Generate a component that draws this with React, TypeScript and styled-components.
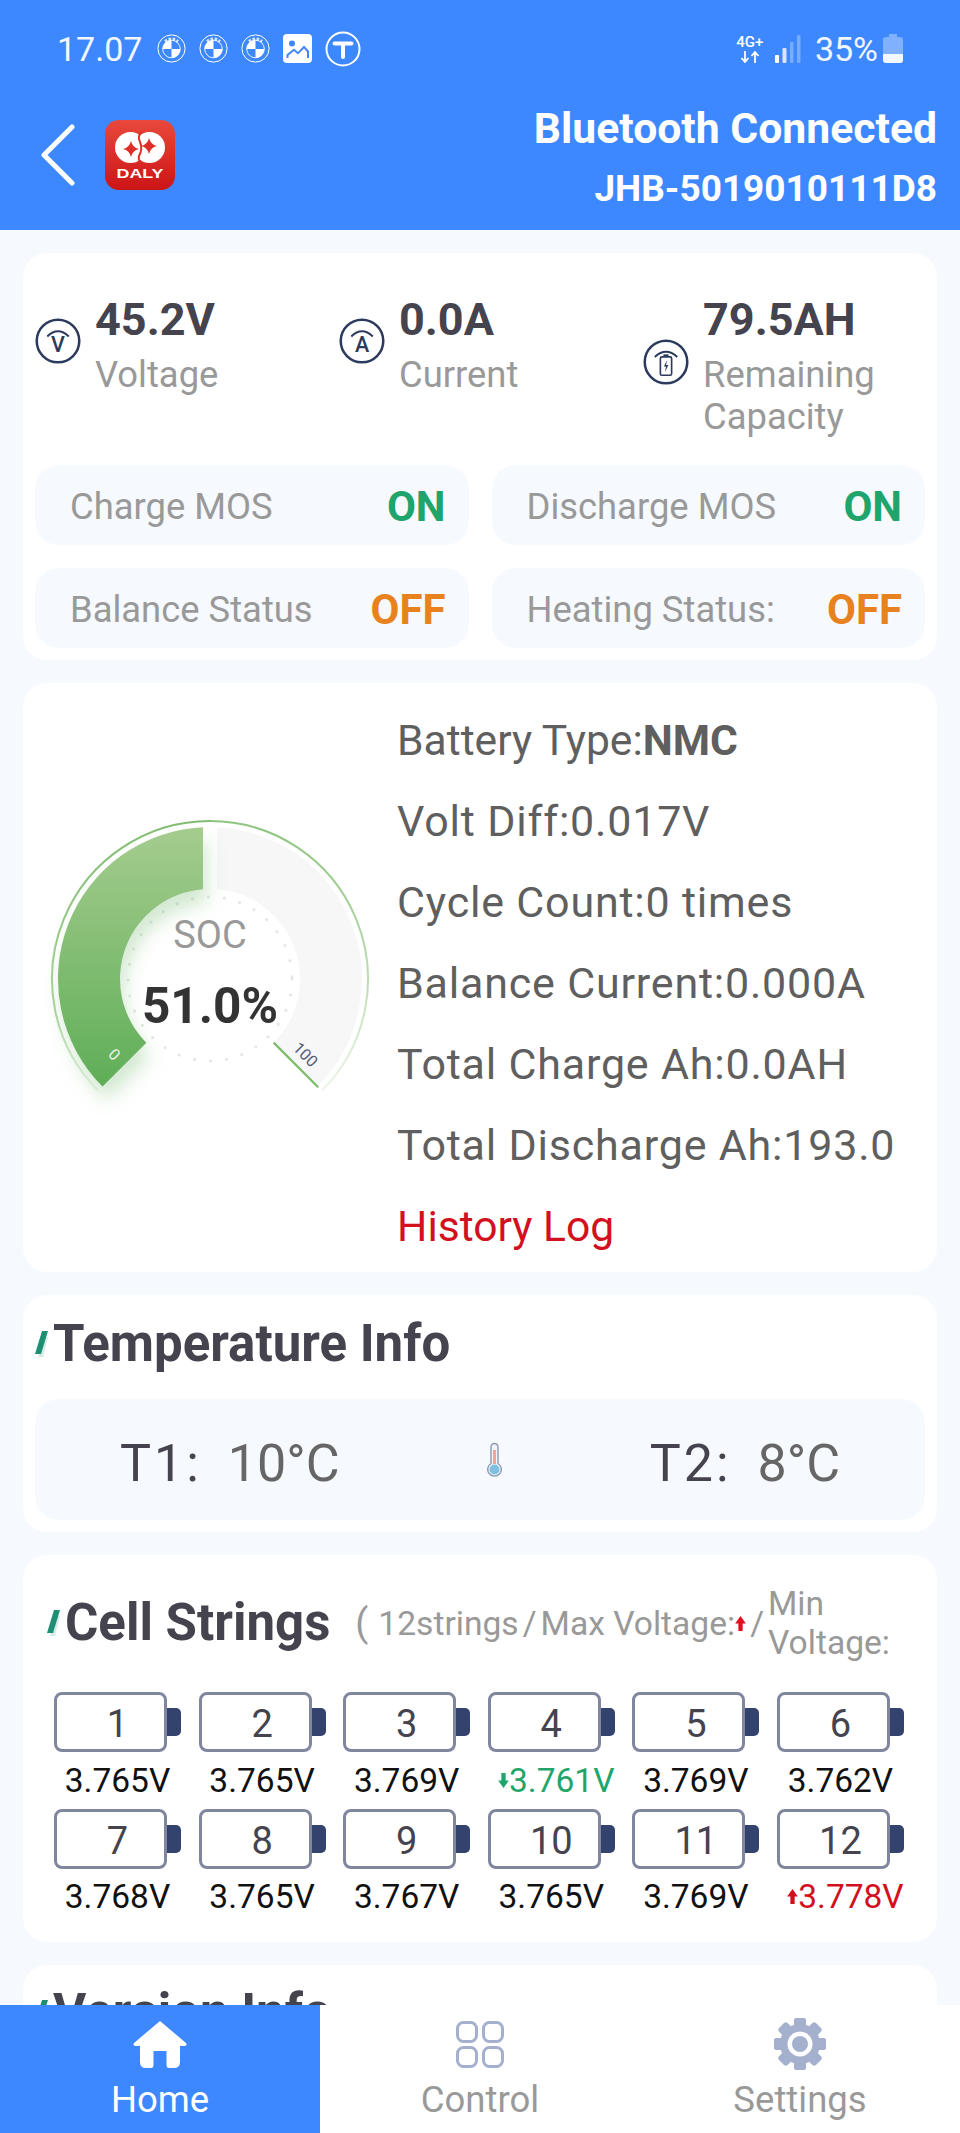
import styled, { createGlobalStyle } from 'styled-components';

const BLUE = '#3d88ff';
const PANEL = '#f6f9fe';

const cells = [
  { id: 1, volts: '3.765V' },
  { id: 2, volts: '3.765V' },
  { id: 3, volts: '3.769V' },
  { id: 4, volts: '3.761V', mark: 'min' },
  { id: 5, volts: '3.769V' },
  { id: 6, volts: '3.762V' },
  { id: 7, volts: '3.768V' },
  { id: 8, volts: '3.765V' },
  { id: 9, volts: '3.767V' },
  { id: 10, volts: '3.765V' },
  { id: 11, volts: '3.769V' },
  { id: 12, volts: '3.778V', mark: 'max' },
];

const GlobalStyle = createGlobalStyle`
  html, body {
    margin: 0;
    padding: 0;
    background: ${PANEL};
    font-family: Roboto, "Liberation Sans", sans-serif;
  }
`;

function polar(r: number, deg: number) {
  const a = (deg * Math.PI) / 180;
  return `${(170 + r * Math.sin(a)).toFixed(2)} ${(169 - r * Math.cos(a)).toFixed(2)}`;
}

// ring sector whose straight ends may sit at different angles on each radius
function sector(r1: number, r2: number, from1: number, to1: number, from2: number, to2: number) {
  const large = to1 - from1 > 180 ? 1 : 0;
  return `M${polar(r1, from1)} A${r1} ${r1} 0 ${large} 1 ${polar(r1, to1)} L${polar(r2, to2)} A${r2} ${r2} 0 ${large} 0 ${polar(r2, from2)} Z`;
}

function Bmw() {
  return (
    <svg width="29" height="29" viewBox="0 0 29 29">
      <circle cx="14.5" cy="14.5" r="13.6" fill="none" stroke="#fff" strokeWidth="1" />
      <path d="M8 7.5Q14.5 2.5 21 7.5" fill="none" stroke="#fff" strokeWidth="3" strokeDasharray="2.5 1.6" opacity="0.8" />
      <circle cx="14.5" cy="15" r="8.8" fill="none" stroke="#fff" strokeWidth="0.9" />
      <path d="M14.5 15V6.2A8.8 8.8 0 0 0 5.7 15Z M14.5 15V23.8A8.8 8.8 0 0 0 23.3 15Z" fill="#fff" />
    </svg>
  );
}

function PictureIcon() {
  return (
    <svg width="29" height="29" viewBox="0 0 29 29">
      <rect width="29" height="29" rx="4" fill="#fff" />
      <circle cx="9" cy="9.5" r="3" fill={BLUE} />
      <path d="M3.5 24V20.5L11 14.5L15 18L21 11.5L26 17V24Z" fill={BLUE} />
      <path d="M5.5 24V21.5L11 17L15 20.5L21 14.5L24 18V24Z" fill="#fff" />
    </svg>
  );
}

function TIcon() {
  return (
    <svg width="36" height="36" viewBox="0 0 36 36">
      <circle cx="18" cy="18" r="16.5" fill="none" stroke="#fff" strokeWidth="2" />
      <path d="M9.5 12.5H26.5M18 12.5V26" fill="none" stroke="#fff" strokeWidth="4" strokeLinecap="round" />
    </svg>
  );
}

function NetArrows() {
  return (
    <svg width="20" height="12" viewBox="0 0 20 12">
      <path d="M5 0V10M1.5 7L5 11L8.5 7M15 12V2M11.5 5L15 1L18.5 5" fill="none" stroke="#fff" strokeWidth="1.8" />
    </svg>
  );
}

function SignalIcon() {
  return (
    <svg width="26" height="28" viewBox="0 0 26 28">
      <rect x="0" y="20" width="4" height="8" rx="1" fill="#fff" />
      <rect x="7.5" y="13" width="4" height="15" rx="1" fill="#fff" opacity="0.8" />
      <rect x="15" y="7" width="3.5" height="21" rx="1" fill="#fff" opacity="0.3" />
      <rect x="22" y="0" width="3.5" height="28" rx="1" fill="#fff" opacity="0.3" />
    </svg>
  );
}

function BatteryIcon() {
  return (
    <svg width="20" height="29" viewBox="0 0 20 29">
      <path d="M6 0H14V3H17Q20 3 20 6V26Q20 29 17 29H3Q0 29 0 26V6Q0 3 3 3H6Z" fill="#fff" opacity="0.35" />
      <path d="M0 20H20V26Q20 29 17 29H3Q0 29 0 26Z" fill="#fff" opacity="0.9" />
    </svg>
  );
}

function DalyLogo() {
  return (
    <svg width="70" height="70" viewBox="0 0 70 70">
      <defs>
        <linearGradient id="dalyRed" x1="0" y1="0" x2="0" y2="1">
          <stop offset="0" stopColor="#e9493c" />
          <stop offset="1" stopColor="#cc1416" />
        </linearGradient>
      </defs>
      <rect width="70" height="70" rx="14" fill="url(#dalyRed)" />
      <circle cx="25.5" cy="27.5" r="15.5" fill="#fff" />
      <circle cx="44.5" cy="27.5" r="15.5" fill="#fff" />
      <path d="M26 21Q27.5 27.5 34 29Q27.5 30.5 26 37Q24.5 30.5 18 29Q24.5 27.5 26 21Z" fill="#dd2f28" />
      <path d="M44 18Q45.5 24.5 52 26Q45.5 27.5 44 34Q42.5 27.5 36 26Q42.5 24.5 44 18Z" fill="#dd2f28" />
      <path d="M37 12Q32 16 35 22Q38 29 34 36Q33 40 36 43" fill="none" stroke="#dd2f28" strokeWidth="2" />
      <text x="35" y="58" textAnchor="middle" fontFamily="Liberation Sans, sans-serif" fontWeight="700" fontSize="12" fill="#fff" textLength="47" lengthAdjust="spacingAndGlyphs">DALY</text>
    </svg>
  );
}

function MeterIcon({ letter }: { letter: string }) {
  return (
    <svg width="46" height="46" viewBox="0 0 45 45">
      <circle cx="22.5" cy="22.5" r="20.8" fill="none" stroke="#2c3a5e" strokeWidth="2.5" />
      <path d="M12 18Q22.5 8 33 18" fill="none" stroke="#2c3a5e" strokeWidth="2" />
      <text x="22.5" y="33.5" textAnchor="middle" fontFamily="Roboto, sans-serif" fontSize="21" fontWeight="500" fill="#2c3a5e">{letter}</text>
    </svg>
  );
}

function CapacityIcon() {
  return (
    <svg width="46" height="46" viewBox="0 0 45 45">
      <circle cx="22.5" cy="22.5" r="20.8" fill="none" stroke="#2c3a5e" strokeWidth="2.5" />
      <path d="M11.5 17.5Q22.5 7.5 33.5 17.5" fill="none" stroke="#2c3a5e" strokeWidth="2" />
      <rect x="17" y="17.5" width="11" height="18" rx="1.5" fill="none" stroke="#2c3a5e" strokeWidth="1.6" />
      <path d="M20 15.8H25" stroke="#2c3a5e" strokeWidth="1.6" />
      <path d="M23.5 20.5L20.5 27H22.5L21.5 32.5L24.8 25.5H22.6Z" fill="#2c3a5e" />
    </svg>
  );
}

function Gauge() {
  return (
    <svg width="340" height="336" viewBox="0 0 340 336">
      <defs>
        <linearGradient id="socFill" x1="0" y1="0" x2="0" y2="1">
          <stop offset="0" stopColor="#a5cc8f" />
          <stop offset="1" stopColor="#5fae57" />
        </linearGradient>
        <linearGradient id="ringLeft" x1="0" y1="0" x2="0" y2="1">
          <stop offset="0" stopColor="#7fbc6f" />
          <stop offset="0.7" stopColor="#a9d39c" />
          <stop offset="1" stopColor="#eef6ec" />
        </linearGradient>
        <linearGradient id="ringRight" x1="0" y1="0" x2="0" y2="1">
          <stop offset="0" stopColor="#8cc47e" />
          <stop offset="0.6" stopColor="#bddcb3" />
          <stop offset="1" stopColor="#eef6ec" />
        </linearGradient>
        <filter id="socShadow" x="-30%" y="-20%" width="160%" height="140%">
          <feDropShadow dx="4" dy="14" stdDeviation="9" floodColor="#5fae57" floodOpacity="0.28" />
        </filter>
      </defs>
      <path d={`M${polar(158, 225)} A158 158 0 0 1 ${polar(158, 360)}`} fill="none" stroke="url(#ringLeft)" strokeWidth="2" />
      <path d={`M${polar(158, 0)} A158 158 0 0 1 ${polar(158, 135)}`} fill="none" stroke="url(#ringRight)" strokeWidth="2" />
      <path d={sector(152, 90, 2.64, 135, 4.46, 135)} fill="#f7f7f8" />
      <path d={`M${polar(90, 135)} L${polar(153, 135)}`} stroke="#7dbb6c" strokeWidth="2.2" />
      <circle cx="170" cy="169" r="82" fill="none" stroke="#e6e6e8" strokeWidth="3" strokeLinecap="round" strokeDasharray="0.1 15.9" />
      <path d={sector(152, 90, 225, 357.36, 225, 355.54)} fill="url(#socFill)" filter="url(#socShadow)" />
      <text x="74" y="250" textAnchor="middle" fontFamily="Roboto, sans-serif" fontSize="16" fill="#e9f4e5" transform="rotate(45 74 245)">0</text>
      <text x="265" y="250" textAnchor="middle" fontFamily="Roboto, sans-serif" fontSize="16" fill="#555a78" transform="rotate(45 265 245)">100</text>
    </svg>
  );
}

function SlashMark() {
  return (
    <svg width="18" height="30" viewBox="0 0 18 30">
      <path d="M8 8H13L8 28H3Z" fill="#d4ebe6" />
      <path d="M7 2H13L6 25H0Z" fill="#1f8f74" />
    </svg>
  );
}

function Thermometer() {
  return (
    <svg width="15" height="36" viewBox="0 0 15 36">
      <path d="M4 5a3.5 3.5 0 0 1 7 0V21.5a6.8 6.8 0 1 1 -7 0Z" fill="#f1f4f8" stroke="#8d9ab0" strokeWidth="1.4" />
      <rect x="6" y="8" width="3" height="14" fill="#e8a89a" />
      <circle cx="7.5" cy="27.5" r="5" fill="#7fbfe0" />
    </svg>
  );
}

function Arrow({ up, color }: { up?: boolean; color: string }) {
  return (
    <svg width="11" height="15" viewBox="0 0 10 14">
      <path d={up ? 'M5 0L10 7H7V14H3V7H0Z' : 'M5 14L10 7H7V0H3V7H0Z'} fill={color} />
    </svg>
  );
}

function HomeIcon() {
  return (
    <svg width="54" height="47" viewBox="0 0 54 47">
      <path d="M27 0L53 22Q54.5 24 52 25H47V41Q47 47 41 47H36Q33.5 47 33.5 44V30H20.5V44Q20.5 47 18 47H13Q7 47 7 41V25H2Q-0.5 24 1 22Z" fill="#fff" />
    </svg>
  );
}

function ControlIcon() {
  return (
    <svg width="48" height="47" viewBox="0 0 48 47">
      <g fill="none" stroke="#a4b0cd" strokeWidth="3">
        <rect x="1.5" y="1.5" width="19" height="19" rx="6" />
        <rect x="27.5" y="1.5" width="19" height="19" rx="6" />
        <rect x="1.5" y="26.5" width="19" height="19" rx="6" />
        <rect x="27.5" y="26.5" width="19" height="19" rx="6" />
      </g>
    </svg>
  );
}

function GearIcon() {
  return (
    <svg width="52" height="52" viewBox="0 0 52 52">
      {[0, 45, 90, 135, 180, 225, 270, 315].map((deg) => (
        <rect key={deg} x="20" y="0" width="12" height="52" rx="3" fill="#a4b0cd" transform={`rotate(${deg} 26 26)`} />
      ))}
      <circle cx="26" cy="26" r="20" fill="#a4b0cd" />
      <circle cx="26" cy="26" r="12.5" fill="#fff" />
      <circle cx="26" cy="26" r="8" fill="#a4b0cd" />
    </svg>
  );
}

function App() {
  return (
    <Screen>
      <GlobalStyle />
      <Header>
        <StatusBar>
          <Clock>17.07</Clock>
          <StatusIcons>
            <Bmw />
            <Bmw />
            <Bmw />
            <PictureIcon />
            <TIcon />
          </StatusIcons>
          <StatusRight>
            <Network>
              <span>4G+</span>
              <NetArrows />
            </Network>
            <SignalIcon />
            <Percent>35%</Percent>
            <BatteryIcon />
          </StatusRight>
        </StatusBar>
        <NavRow>
          <BackArrow width="34" height="62" viewBox="0 0 34 62">
            <path d="M31 3L3 31L31 59" fill="none" stroke="#fff" strokeWidth="5" strokeLinecap="round" strokeLinejoin="round" />
          </BackArrow>
          <DalyLogo />
          <DeviceInfo>
            <ConnState>Bluetooth Connected</ConnState>
            <DeviceId>JHB-5019010111D8</DeviceId>
          </DeviceInfo>
        </NavRow>
      </Header>

      <Scroll>
        <StatusCard>
          <Stats>
            <Stat>
              <MeterIcon letter="V" />
              <StatText>
                <StatValue>45.2V</StatValue>
                <StatLabel>Voltage</StatLabel>
              </StatText>
            </Stat>
            <Stat>
              <MeterIcon letter="A" />
              <StatText>
                <StatValue>0.0A</StatValue>
                <StatLabel>Current</StatLabel>
              </StatText>
            </Stat>
            <Stat>
              <CapacityIcon />
              <StatText>
                <StatValue>79.5AH</StatValue>
                <StatLabel>Remaining Capacity</StatLabel>
              </StatText>
            </Stat>
          </Stats>
          <Flags>
            <Flag>
              <FlagLabel>Charge MOS</FlagLabel>
              <FlagValue $on>ON</FlagValue>
            </Flag>
            <Flag>
              <FlagLabel>Discharge MOS</FlagLabel>
              <FlagValue $on>ON</FlagValue>
            </Flag>
            <Flag>
              <FlagLabel>Balance Status</FlagLabel>
              <FlagValue>OFF</FlagValue>
            </Flag>
            <Flag>
              <FlagLabel>Heating Status:</FlagLabel>
              <FlagValue>OFF</FlagValue>
            </Flag>
          </Flags>
        </StatusCard>

        <SocCard>
          <GaugeWrap>
            <Gauge />
            <Readout>
              <SocLabel>SOC</SocLabel>
              <SocValue>51.0%</SocValue>
            </Readout>
          </GaugeWrap>
          <InfoList>
            <InfoRow $tight>Battery Type:<b>NMC</b></InfoRow>
            <InfoRow>Volt Diff:0.017V</InfoRow>
            <InfoRow>Cycle Count:0 times</InfoRow>
            <InfoRow>Balance Current:0.000A</InfoRow>
            <InfoRow>Total Charge Ah:0.0AH</InfoRow>
            <InfoRow>Total Discharge Ah:193.0</InfoRow>
            <InfoRow $tight $link>History Log</InfoRow>
          </InfoList>
        </SocCard>

        <TempCard>
          <SectionTitle>
            <SlashMark />
            Temperature Info
          </SectionTitle>
          <TempPanel>
            <TempItem>
              <TempName>T1:</TempName>
              <TempValue>10°C</TempValue>
            </TempItem>
            <Thermometer />
            <TempItem>
              <TempName>T2:</TempName>
              <TempValue>8°C</TempValue>
            </TempItem>
          </TempPanel>
        </TempCard>

        <CellCard>
          <CellHead>
            <SectionTitle>
              <SlashMark />
              Cell Strings
            </SectionTitle>
            <Paren>(</Paren>
            <CellNote>12strings</CellNote>
            <NoteSlash>/</NoteSlash>
            <CellNote>Max Voltage:</CellNote>
            <Arrow up color="#e0101e" />
            <NoteSlash>/</NoteSlash>
            <CellNote $wrap>Min Voltage:</CellNote>
          </CellHead>
          <CellGrid>
            {cells.map((cell) => (
              <Cell key={cell.id}>
                <Battery>
                  <BatteryBody>{cell.id}</BatteryBody>
                  <BatteryNub />
                </Battery>
                <Volts $mark={cell.mark}>
                  {cell.mark === 'min' && <Arrow color="#1fa56b" />}
                  {cell.mark === 'max' && <Arrow up color="#d3101e" />}
                  {cell.volts}
                </Volts>
              </Cell>
            ))}
          </CellGrid>
        </CellCard>

        <VersionCard>
          <SectionTitle>
            <SlashMark />
            Version Info
          </SectionTitle>
        </VersionCard>
      </Scroll>

      <TabBar>
        <Tab $active>
          <TabIcon>
            <HomeIcon />
          </TabIcon>
          Home
        </Tab>
        <Tab>
          <TabIcon>
            <ControlIcon />
          </TabIcon>
          Control
        </Tab>
        <Tab>
          <TabIcon>
            <GearIcon />
          </TabIcon>
          Settings
        </Tab>
      </TabBar>
    </Screen>
  );
}

const Screen = styled.div`
  display: flex;
  flex-direction: column;
  height: 100vh;
  overflow: hidden;
  background: ${PANEL};
`;

const Header = styled.header`
  flex: none;
  height: 230px;
  background: ${BLUE};
  color: #fff;
`;

const StatusBar = styled.div`
  display: flex;
  align-items: center;
  height: 97px;
  padding: 0 57px 0 57px;
`;

const Clock = styled.span`
  font-size: 34px;
  color: #f2f7ff;
`;

const StatusIcons = styled.div`
  display: flex;
  align-items: center;
  gap: 13px;
  margin-left: 15px;
`;

const StatusRight = styled.div`
  display: flex;
  align-items: center;
  margin-left: auto;
`;

const Network = styled.div`
  display: flex;
  flex-direction: column;
  align-items: center;
  width: 30px;
  margin-right: 10px;
  font-size: 15px;
  font-weight: 500;
  line-height: 17px;

  span {
    white-space: nowrap;
  }
`;

const Percent = styled.span`
  margin: 0 5px 0 14px;
  font-size: 34px;
  color: #f2f7ff;
`;

const NavRow = styled.div`
  display: flex;
  align-items: center;
  height: 125px;
  box-sizing: border-box;
  padding: 0 23px 9px 41px;
`;

const BackArrow = styled.svg`
  margin-right: 30px;
`;

const DeviceInfo = styled.div`
  align-self: flex-start;
  margin-left: auto;
  text-align: right;
  white-space: nowrap;
`;

const ConnState = styled.div`
  font-size: 42.7px;
  line-height: 62px;
  font-weight: 700;
`;

const DeviceId = styled.div`
  font-size: 37px;
  line-height: 60px;
  font-weight: 700;
`;

const Scroll = styled.main`
  flex: 1;
  min-height: 0;
  overflow: hidden;
  display: flex;
  flex-direction: column;
  gap: 23px;
  padding: 23px 23px 0;
`;

const Card = styled.section`
  flex: none;
  background: #fff;
  border-radius: 24px;
`;

const StatusCard = styled(Card)`
  height: 407px;
  padding: 33px 12px 12px;
  box-sizing: border-box;
`;

const Stats = styled.div`
  display: grid;
  grid-template-columns: repeat(3, 304px);
  height: 179px;
`;

const Stat = styled.div`
  display: flex;
  align-items: center;
  align-self: start;
  gap: 14px;
`;

const StatText = styled.div`
  flex: 1;
  min-width: 0;
`;

const StatValue = styled.div`
  font-size: 45px;
  line-height: 68px;
  font-weight: 700;
  color: #45434e;
`;

const StatLabel = styled.div`
  font-size: 36.4px;
  line-height: 42px;
  color: #999;
`;

const Flags = styled.div`
  display: grid;
  grid-template-columns: 1fr 1fr;
  gap: 23px;
`;

const Flag = styled.div`
  display: flex;
  align-items: center;
  justify-content: space-between;
  height: 80px;
  padding: 2px 23px 0 35px;
  box-sizing: border-box;
  border-radius: 24px;
  background: ${PANEL};
`;

const FlagLabel = styled.span`
  font-size: 36.4px;
  color: #999;
`;

const FlagValue = styled.span<{ $on?: boolean }>`
  font-size: 42px;
  font-weight: 700;
  color: ${(p) => (p.$on ? '#1fa56b' : '#e8821f')};
`;

const SocCard = styled(Card)`
  display: flex;
  align-items: center;
  height: 589px;
  padding-left: 17px;
  box-sizing: border-box;
`;

const GaugeWrap = styled.div`
  position: relative;
  flex: none;
  width: 340px;
  height: 336px;
  margin-right: 17px;
`;

const Readout = styled.div`
  position: absolute;
  top: 103px;
  left: 0;
  right: 0;
  display: flex;
  flex-direction: column;
  align-items: center;
`;

const SocLabel = styled.div`
  font-size: 38px;
  line-height: 44px;
  color: #999;
`;

const SocValue = styled.div`
  margin-top: 21px;
  font-size: 49.5px;
  line-height: 56px;
  font-weight: 700;
  color: #333;
`;

const InfoList = styled.div`
  flex: 1;
  padding-top: 12px;
`;

const InfoRow = styled.div<{ $link?: boolean; $tight?: boolean }>`
  font-size: ${(p) => (p.$tight ? '42.6px' : '43px')};
  letter-spacing: ${(p) => (p.$tight ? '0' : '0.8px')};
  line-height: 81px;
  color: ${(p) => (p.$link ? '#d3101e' : '#5f5f5f')};
  white-space: nowrap;

  b {
    font-weight: 700;
  }
`;

const SectionTitle = styled.h2`
  display: flex;
  align-items: center;
  margin: 0;
  font-size: 51px;
  line-height: 56px;
  font-weight: 700;
  color: #45434e;
  white-space: nowrap;
`;

const TempCard = styled(Card)`
  height: 237px;
  padding: 21px 12px 12px;
  box-sizing: border-box;
`;

const TempPanel = styled.div`
  display: flex;
  align-items: center;
  justify-content: space-between;
  height: 121px;
  margin-top: 27px;
  padding: 0 85px;
  border-radius: 24px;
  background: ${PANEL};
`;

const TempItem = styled.div`
  display: flex;
  align-items: baseline;
  padding-top: 8px;
  font-size: 52px;
`;

const TempName = styled.span`
  margin-right: 26px;
  letter-spacing: 3px;
  color: #45434e;
`;

const TempValue = styled.span`
  color: #666;
`;

const CellCard = styled(Card)`
  height: 387px;
  padding: 28px 31px 0 24px;
  box-sizing: border-box;
`;

const CellHead = styled.div`
  display: flex;
  align-items: center;
  height: 80px;
`;

const Paren = styled.span`
  margin: 0 10px 0 25px;
  font-size: 38px;
  color: #999;
`;

const CellNote = styled.span<{ $wrap?: boolean }>`
  font-size: 33.6px;
  line-height: 39px;
  color: #999;
  ${(p) => (p.$wrap ? 'width: 125px;' : 'white-space: nowrap;')}
`;

const NoteSlash = styled(CellNote)`
  margin: 0 4px;
`;

const CellGrid = styled.div`
  display: grid;
  grid-template-columns: repeat(6, 127px);
  column-gap: 17.6px;
  margin: 29px 0 0 7px;
`;

const Cell = styled.div`
  display: flex;
  flex-direction: column;
  align-items: center;
`;

const Battery = styled.div`
  display: flex;
  align-items: center;
  align-self: stretch;
`;

const BatteryBody = styled.div`
  flex: none;
  width: 113px;
  height: 60px;
  box-sizing: border-box;
  padding-left: 14px;
  border: 3px solid #80869e;
  border-radius: 8px;
  text-align: center;
  font-size: 38px;
  line-height: 58px;
  color: #45434e;
`;

const BatteryNub = styled.div`
  width: 14px;
  height: 28px;
  border-radius: 0 5px 5px 0;
  background: #34436d;
`;

const Volts = styled.div<{ $mark?: string }>`
  display: flex;
  align-items: center;
  justify-content: center;
  height: 56.5px;
  margin-left: ${(p) => (p.$mark ? '10px' : '0')};
  font-size: 33.5px;
  white-space: nowrap;
  color: ${(p) => (p.$mark === 'min' ? '#1fa56b' : p.$mark === 'max' ? '#d3101e' : '#111')};
`;

const VersionCard = styled(Card)`
  height: 200px;
  padding: 20px 12px;
  box-sizing: border-box;
`;

const TabBar = styled.nav`
  flex: none;
  display: grid;
  grid-template-columns: repeat(3, 1fr);
  height: 128px;
  background: #fff;
`;

const Tab = styled.div<{ $active?: boolean }>`
  display: flex;
  flex-direction: column;
  align-items: center;
  font-size: 36.5px;
  line-height: 44px;
  color: ${(p) => (p.$active ? '#fff' : '#999')};
  background: ${(p) => (p.$active ? BLUE : 'transparent')};
`;

const TabIcon = styled.div`
  display: flex;
  align-items: center;
  justify-content: center;
  height: 52px;
  margin: 13px 0 8px;
`;

export default App;
